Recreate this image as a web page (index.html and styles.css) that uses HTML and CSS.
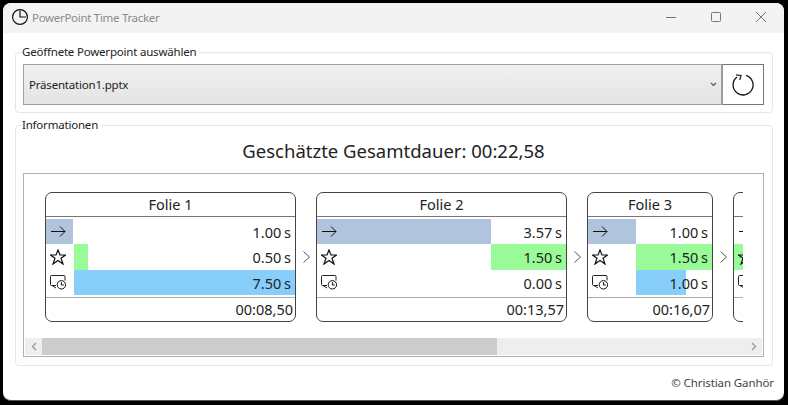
FILE: index.html
```html
<!DOCTYPE html>
<html lang="de">
<head>
    <meta charset="UTF-8">
    <meta name="viewport" content="width=device-width, initial-scale=1.0">
    <title>PowerPoint Time Tracker</title>
    <link rel="stylesheet" href="styles.css">
</head>
<body>
    <svg class="defs" width="0" height="0">
        <symbol id="icon-arrow" viewBox="0 0 16 16">
            <path d="M1 7.5H15M10 2.5L15 7.5L10 12.5" fill="none" stroke="#111" stroke-width="1"/>
        </symbol>
        <symbol id="icon-star" viewBox="0 0 16 16">
            <path d="M8 1L10 6H15.5L11 9.3L13 15L8 11.5L3 15L5 9.3L.5 6H6Z" fill="none" stroke="#111" stroke-width="1.2"/>
        </symbol>
        <symbol id="icon-timer" viewBox="0 0 16 16">
            <path d="M6 11.5H1.5A1 1 0 0 1 .5 10.5V2.5A1 1 0 0 1 1.5 1.5H14A1 1 0 0 1 15 2.5V6.5M2 11.5L6 14" fill="none" stroke="#222" stroke-width="1"/>
            <circle cx="11.4" cy="10.8" r="4.2" fill="#fff" stroke="#111" stroke-width="1"/>
            <path d="M11.4 8.2V11H13.8" fill="none" stroke="#111" stroke-width="1"/>
        </symbol>
        <symbol id="icon-next" viewBox="0 0 9 14">
            <path d="M1.5 1.5L7.5 7L1.5 12.5" fill="none" stroke="#555" stroke-width="1"/>
        </symbol>
    </svg>

    <div class="window">
        <header class="titlebar">
            <svg class="app-icon" width="18" height="18" viewBox="0 0 18 18">
                <circle cx="9" cy="9" r="7.4" fill="none" stroke="#111" stroke-width="1.2"/>
                <path d="M9 2.5V9H15" fill="none" stroke="#111" stroke-width="1.2"/>
            </svg>
            <span class="app-title">PowerPoint Time Tracker</span>
            <div class="caption-buttons">
                <svg width="10" height="10" viewBox="0 0 10 10"><path d="M0 5.5H10" stroke="#777"/></svg>
                <svg width="10" height="10" viewBox="0 0 10 10"><rect x=".5" y=".5" width="9" height="9" rx="1" fill="none" stroke="#777"/></svg>
                <svg width="10" height="10" viewBox="0 0 10 10"><path d="M0 0L10 10M10 0L0 10" stroke="#777"/></svg>
            </div>
        </header>

        <main class="content">
            <fieldset class="group">
                <legend>Geöffnete Powerpoint auswählen</legend>
                <div class="picker">
                    <div class="combo">
                        <span>Präsentation1.pptx</span>
                        <svg width="7" height="5" viewBox="0 0 7 5"><path d="M1 1L3.5 3.5L6 1" fill="none" stroke="#555" stroke-width="1.1"/></svg>
                    </div>
                    <button class="refresh" type="button" aria-label="Aktualisieren">
                        <svg width="24" height="24" viewBox="0 0 24 24">
                            <path d="M15 2.4A10 10 0 1 1 6 4" fill="none" stroke="#111" stroke-width="1.3"/>
                            <path d="M5 1.8L10 2.5L8.8 7" fill="none" stroke="#16324f" stroke-width="1.3"/>
                        </svg>
                    </button>
                </div>
            </fieldset>

            <fieldset class="group">
                <legend>Informationen</legend>
                <h2 class="total">Geschätzte Gesamtdauer: 00:22,58</h2>
                <div class="scroller">
                    <div class="cards">
                        <section class="card card-wide">
                            <h3>Folie 1</h3>
                            <div class="rows">
                                <div class="row">
                                    <i class="bar bar-move" style="width: 27px"></i>
                                    <svg class="row-icon"><use href="#icon-arrow"/></svg>
                                    <span class="value">1.00 s</span>
                                </div>
                                <div class="row">
                                    <i class="bar bar-star" style="margin-left: 28px; width: 14px"></i>
                                    <svg class="row-icon"><use href="#icon-star"/></svg>
                                    <span class="value">0.50 s</span>
                                </div>
                                <div class="row">
                                    <i class="bar bar-wait" style="margin-left: 28px; width: 221px"></i>
                                    <svg class="row-icon"><use href="#icon-timer"/></svg>
                                    <span class="value">7.50 s</span>
                                </div>
                            </div>
                            <div class="sum">00:08,50</div>
                        </section>
                        <svg class="next"><use href="#icon-next"/></svg>
                        <section class="card card-wide">
                            <h3>Folie 2</h3>
                            <div class="rows">
                                <div class="row">
                                    <i class="bar bar-move" style="width: 174px"></i>
                                    <svg class="row-icon"><use href="#icon-arrow"/></svg>
                                    <span class="value">3.57 s</span>
                                </div>
                                <div class="row">
                                    <i class="bar bar-star" style="margin-left: 174px; width: 75px"></i>
                                    <svg class="row-icon"><use href="#icon-star"/></svg>
                                    <span class="value">1.50 s</span>
                                </div>
                                <div class="row">
                                    <svg class="row-icon"><use href="#icon-timer"/></svg>
                                    <span class="value">0.00 s</span>
                                </div>
                            </div>
                            <div class="sum">00:13,57</div>
                        </section>
                        <svg class="next"><use href="#icon-next"/></svg>
                        <section class="card card-narrow">
                            <h3>Folie 3</h3>
                            <div class="rows">
                                <div class="row">
                                    <i class="bar bar-move" style="width: 48px"></i>
                                    <svg class="row-icon"><use href="#icon-arrow"/></svg>
                                    <span class="value">1.00 s</span>
                                </div>
                                <div class="row">
                                    <i class="bar bar-star" style="margin-left: 48px; width: 76px"></i>
                                    <svg class="row-icon"><use href="#icon-star"/></svg>
                                    <span class="value">1.50 s</span>
                                </div>
                                <div class="row">
                                    <i class="bar bar-wait" style="margin-left: 48px; width: 50px"></i>
                                    <svg class="row-icon"><use href="#icon-timer"/></svg>
                                    <span class="value">1.00 s</span>
                                </div>
                            </div>
                            <div class="sum">00:16,07</div>
                        </section>
                        <svg class="next"><use href="#icon-next"/></svg>
                        <section class="card card-narrow">
                            <h3>&nbsp;</h3>
                            <div class="rows">
                                <div class="row">
                                    <svg class="row-icon"><use href="#icon-arrow"/></svg>
                                </div>
                                <div class="row">
                                    <i class="bar bar-star" style="width: 76px"></i>
                                    <svg class="row-icon"><use href="#icon-star"/></svg>
                                </div>
                                <div class="row">
                                    <svg class="row-icon"><use href="#icon-timer"/></svg>
                                </div>
                            </div>
                            <div class="sum">&nbsp;</div>
                        </section>
                    </div>
                    <div class="scrollbar">
                        <span class="scroll-btn">
                            <svg width="6" height="9" viewBox="0 0 6 9"><path d="M5 1L1.5 4.5L5 8" fill="none" stroke="#999" stroke-width="1.4"/></svg>
                        </span>
                        <div class="scroll-track"><div class="scroll-thumb"></div></div>
                        <span class="scroll-btn">
                            <svg width="6" height="9" viewBox="0 0 6 9"><path d="M1 1L4.5 4.5L1 8" fill="none" stroke="#999" stroke-width="1.4"/></svg>
                        </span>
                    </div>
                </div>
            </fieldset>

            <footer class="copyright">© Christian Ganhör</footer>
        </main>
    </div>
</body>
</html>
```

FILE: styles.css
```css
html, body {
    height: 100%;
}
body {
    margin: 0;
    padding: 3px 4px 5px 3px;
    box-sizing: border-box;
    background-color: #000;
    font-family: "Noto Sans", "Open Sans", sans-serif;
    color: #222;
    overflow: hidden;
}
.defs {
    position: absolute;
}
.window {
    height: 100%;
    display: flex;
    flex-direction: column;
    background-color: #fff;
    border-radius: 8px;
    border-bottom: 1px solid #555;
    overflow: hidden;
}
.titlebar {
    height: 30px;
    box-sizing: border-box;
    flex: none;
    display: flex;
    align-items: center;
    padding: 0 0 2px 8px;
    background-color: #f3f3f3;
}
.app-icon {
    margin-top: -1px;
}
.app-title {
    margin-left: 3px;
    font-size: 11.5px;
    letter-spacing: -0.3px;
    color: #8a8a8a;
}
.caption-buttons {
    margin-left: auto;
    display: flex;
    gap: 35px;
    padding-right: 18px;
}
.content {
    flex: 1;
    padding: 11px 11px 0 12px;
}
.group {
    margin: 0 0 4px;
    padding: 4px 8px 7px 7px;
    min-width: 0;
    border: 1px solid #e1e7ee;
    border-radius: 4px;
}
.group legend {
    padding: 0 3px 0 0;
    margin-left: -1px;
    font-size: 11.5px;
    letter-spacing: -0.2px;
    line-height: 16px;
    color: #222;
}
.picker {
    display: flex;
    height: 41px;
}
.combo {
    flex: 1;
    display: flex;
    align-items: center;
    justify-content: space-between;
    padding: 0 4px 0 5px;
    border: 1px solid #a0a0a0;
    background: linear-gradient(#f0f0f0, #e4e4e4);
    font-size: 11.5px;
    letter-spacing: -0.2px;
}
.refresh {
    width: 42px;
    padding: 0;
    display: flex;
    align-items: center;
    justify-content: center;
    background-color: #fff;
    border: 1px solid #777;
    border-left-color: #999;
}
.total {
    margin: 0;
    height: 36px;
    font-size: 18.5px;
    font-weight: 400;
    line-height: 28px;
    text-align: center;
    color: #222;
}
.scroller {
    height: 184px;
    margin-bottom: 1px;
    box-sizing: border-box;
    display: flex;
    flex-direction: column;
    border: 1px solid #b0b0b0;
}
.cards {
    flex: 1;
    min-height: 0;
    margin: 0 20px 0 21px;
    padding-top: 18px;
    display: flex;
    align-items: flex-start;
    overflow: hidden;
}
.card {
    flex: none;
    height: 130px;
    box-sizing: border-box;
    display: flex;
    flex-direction: column;
    border: 1px solid #444;
    border-radius: 7px;
    overflow: hidden;
}
.card-wide {
    width: 251px;
}
.card-narrow {
    width: 126px;
}
.card h3 {
    margin: 0;
    height: 23px;
    flex: none;
    border-bottom: 1px solid #777;
    font-size: 14.5px;
    font-weight: 400;
    line-height: 23px;
    text-align: center;
}
.rows {
    flex: none;
    padding: 2px 0;
    display: flex;
    flex-direction: column;
    border-bottom: 1px solid #aaa;
}
.row {
    height: 25.3px;
    display: grid;
    align-items: center;
    font-size: 14.5px;
}
.row > * {
    grid-area: 1 / 1;
}
.bar {
    display: block;
    justify-self: start;
    height: 100%;
}
.bar-move {
    background-color: #b0c4de;
}
.bar-star {
    background-color: #98fb98;
}
.bar-wait {
    background-color: #87cefa;
}
.row-icon {
    justify-self: start;
    margin-left: 4px;
    width: 16px;
    height: 16px;
}
.value {
    justify-self: end;
    padding: 1px 4px 0 0;
    word-spacing: -1px;
}
.sum {
    padding-right: 2px;
    font-size: 14.5px;
    line-height: 23px;
    text-align: right;
}
.next {
    flex: none;
    width: 9px;
    height: 14px;
    margin: 58px 5px 0 6px;
}
.scrollbar {
    flex: none;
    height: 17px;
    margin: 0 1px 1px;
    display: flex;
    background-color: #eee;
}
.scroll-btn {
    flex: none;
    width: 17px;
    display: flex;
    align-items: center;
    justify-content: center;
}
.scroll-track {
    flex: 1;
}
.scroll-thumb {
    width: 455px;
    height: 100%;
    background-color: #ccc;
}
.copyright {
    padding: 5px 0 0;
    font-size: 11.5px;
    letter-spacing: -0.1px;
    line-height: 16px;
    text-align: right;
    color: #444;
    margin-right: -1px;
}
```
